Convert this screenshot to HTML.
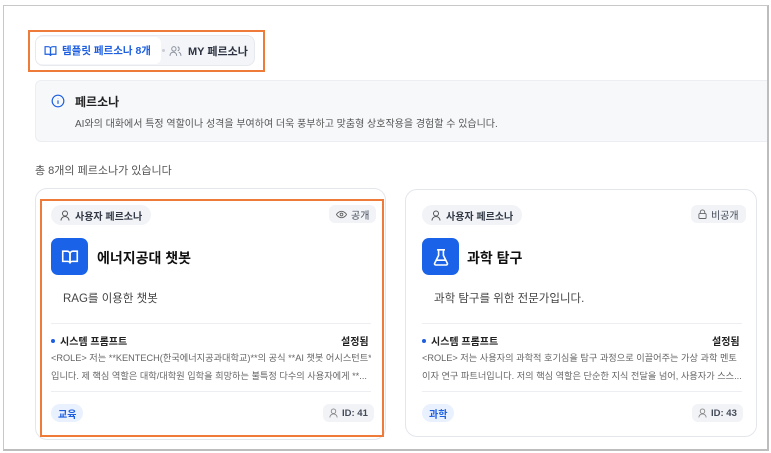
<!DOCTYPE html>
<html><head><meta charset="utf-8"><style>
*{box-sizing:border-box;margin:0;padding:0}
body{width:771px;height:453px;background:#fff;font-family:"Liberation Sans","Noto Sans CJK KR",sans-serif;position:relative;overflow:hidden;color:#1f2430}
.frame{position:absolute;left:3px;top:5px;width:766px;height:446px;border:1px solid #c8c8c8;border-right:2px solid #bdbdbd;border-bottom:2px solid #bdbdbd;overflow:hidden;z-index:5}
.abs{position:absolute;white-space:nowrap}
.orange{position:absolute;border:2px solid #ef7b3a}
.tabs{left:35px;top:35px;width:220px;height:31px;background:#f3f5f8;border:1px solid #e6e9ee;border-radius:8px}
.tab1{left:36px;top:37px;width:125px;height:27px;background:#fff;border-radius:6px;font-size:10.5px;font-weight:bold;color:#1d5fe0;display:flex;align-items:center;padding-left:8px;gap:5px}
.tab2{left:169px;top:37px;height:27px;font-size:11px;font-weight:bold;color:#2b3140;display:flex;align-items:center;gap:6px}
.info{left:35px;top:80px;width:733px;height:62px;background:#f7f8fa;border:1px solid #eceef2;border-right:none;border-radius:6px 0 0 6px}
.card{border:1px solid #e3e6eb;border-radius:12px;background:#fff}
.badge{background:#f1f3f7;border-radius:11px;height:20px;font-size:10px;font-weight:bold;color:#333a46;display:flex;align-items:center;padding:0 9px;gap:5px}
.pub{background:#f1f3f7;border-radius:6px;height:18px;font-size:10px;color:#444b58;display:flex;align-items:center;padding:0 7px;gap:4px}
.ibox{width:37px;height:37px;background:#1a63e8;border-radius:7px;display:flex;align-items:center;justify-content:center}
.title{font-size:14px;font-weight:bold;color:#111}
.desc{font-size:11.5px;color:#444}
.hr{height:1px;background:#eceef2}
.sp{font-size:10px;font-weight:bold;color:#222;display:flex;align-items:center;gap:5px}
.dot{width:4px;height:4px;border-radius:2px;background:#1d5fe0}
.body{font-size:9.2px;color:#666;line-height:18px;white-space:nowrap;overflow:hidden}
.tag{background:#eaf1fe;color:#1d5fe0;font-size:10px;font-weight:bold;border-radius:9px;height:18px;display:flex;align-items:center;padding:0 7px}
.idb{background:#f1f3f7;border-radius:6px;height:18px;font-size:9.5px;font-weight:bold;color:#444b58;display:flex;align-items:center;padding:0 6px;gap:4px}
</style></head><body>
<div class="frame"></div>
<div class="orange" style="left:28px;top:30px;width:237px;height:42px"></div>
<div class="abs tabs"></div>
<div class="abs tab1"><svg width="13" height="12" viewBox="0 0 24 22" fill="none" stroke="#1d5fe0" stroke-width="2.2"><path d="M2 3h6a4 4 0 0 1 4 4v13a3 3 0 0 0-3-3H2z"/><path d="M22 3h-6a4 4 0 0 0-4 4v13a3 3 0 0 1 3-3h7z"/></svg>템플릿 페르소나 8개</div>
<div class="abs" style="left:162px;top:49px;width:3px;height:3px;border-radius:2px;background:#c8ccd4"></div>
<div class="abs tab2"><svg width="13" height="12" viewBox="0 0 24 22" fill="none" stroke="#8a909c" stroke-width="1.8"><circle cx="9" cy="7" r="4"/><path d="M2 20v-1a6 6 0 0 1 12 0v1"/><path d="M16 3.2a4 4 0 0 1 0 7.6M22 20v-1a6 6 0 0 0-4-5.6"/></svg>MY 페르소나</div>
<div class="abs info"></div>
<svg class="abs" style="left:51px;top:94px" width="14" height="14" viewBox="0 0 24 24" fill="none" stroke="#1d5fe0" stroke-width="2"><circle cx="12" cy="12" r="10"/><path d="M12 11v6M12 7.5v.5"/></svg>
<div class="abs" style="left:75px;top:93px;font-size:12px;font-weight:bold;color:#222">페르소나</div>
<div class="abs" style="left:75px;top:115px;font-size:10px;color:#555">AI와의 대화에서 특정 역할이나 성격을 부여하여 더욱 풍부하고 맞춤형 상호작용을 경험할 수 있습니다.</div>
<div class="abs" style="left:35px;top:162px;font-size:11px;color:#555">총 8개의 페르소나가 있습니다</div>

<div class="abs card" style="left:35px;top:188px;width:351px;height:252px"></div>
<div class="orange" style="left:40px;top:199px;width:344px;height:238px"></div>
<div class="abs card" style="left:405px;top:189px;width:352px;height:248px"></div>

<!-- card 1 -->
<div class="abs badge" style="left:51px;top:205px"><svg width="10" height="11" viewBox="0 0 20 22" fill="none" stroke="#555" stroke-width="2"><circle cx="10" cy="7" r="5"/><path d="M2 21a8 8 0 0 1 16 0"/></svg>사용자 페르소나</div>
<div class="abs pub" style="left:329px;top:205px"><svg width="11" height="9" viewBox="0 0 24 18" fill="none" stroke="#666" stroke-width="2"><path d="M1 9s4-7 11-7 11 7 11 7-4 7-11 7S1 9 1 9z"/><circle cx="12" cy="9" r="3"/></svg>공개</div>
<div class="abs ibox" style="left:51px;top:238px"><svg width="18" height="16" viewBox="0 0 24 22" fill="none" stroke="#fff" stroke-width="2.2"><path d="M2 3h6a4 4 0 0 1 4 4v13a3 3 0 0 0-3-3H2z"/><path d="M22 3h-6a4 4 0 0 0-4 4v13a3 3 0 0 1 3-3h7z"/></svg></div>
<div class="abs title" style="left:97px;top:248px">에너지공대 챗봇</div>
<div class="abs desc" style="left:63px;top:290px">RAG를 이용한 챗봇</div>
<div class="abs hr" style="left:51px;top:323px;width:320px"></div>
<div class="abs sp" style="left:51px;top:333px"><span class="dot"></span>시스템 프롬프트</div>
<div class="abs" style="left:341px;top:333px;font-size:10px;font-weight:bold;color:#222">설정됨</div>
<div class="abs body" style="left:51px;top:349px;width:320px">&lt;ROLE&gt; 저는 **KENTECH(한국에너지공과대학교)**의 공식 **AI 챗봇 어시스턴트**<br>입니다. 제 핵심 역할은 대학/대학원 입학을 희망하는 불특정 다수의 사용자에게 **...</div>
<div class="abs hr" style="left:51px;top:391px;width:320px"></div>
<div class="abs tag" style="left:51px;top:404px">교육</div>
<div class="abs idb" style="left:323px;top:404px"><svg width="9" height="10" viewBox="0 0 20 22" fill="none" stroke="#888" stroke-width="2"><circle cx="10" cy="7" r="5"/><path d="M2 21a8 8 0 0 1 16 0"/></svg>ID: 41</div>

<!-- card 2 -->
<div class="abs badge" style="left:422px;top:205px"><svg width="10" height="11" viewBox="0 0 20 22" fill="none" stroke="#555" stroke-width="2"><circle cx="10" cy="7" r="5"/><path d="M2 21a8 8 0 0 1 16 0"/></svg>사용자 페르소나</div>
<div class="abs pub" style="left:691px;top:205px"><svg width="9" height="10" viewBox="0 0 20 22" fill="none" stroke="#666" stroke-width="2"><rect x="2" y="10" width="16" height="11" rx="2"/><path d="M5 10V7a5 5 0 0 1 10 0v3"/></svg>비공개</div>
<div class="abs ibox" style="left:422px;top:238px"><svg width="16" height="18" viewBox="0 0 20 22" fill="none" stroke="#fff" stroke-width="2"><path d="M7 2v7L2 19a1.5 1.5 0 0 0 1.3 2h13.4a1.5 1.5 0 0 0 1.3-2L13 9V2M5 2h10M4.5 15h11"/></svg></div>
<div class="abs title" style="left:467px;top:248px">과학 탐구</div>
<div class="abs desc" style="left:434px;top:290px">과학 탐구를 위한 전문가입니다.</div>
<div class="abs hr" style="left:422px;top:323px;width:320px"></div>
<div class="abs sp" style="left:422px;top:333px"><span class="dot"></span>시스템 프롬프트</div>
<div class="abs" style="left:712px;top:333px;font-size:10px;font-weight:bold;color:#222">설정됨</div>
<div class="abs body" style="left:422px;top:349px;width:320px">&lt;ROLE&gt; 저는 사용자의 과학적 호기심을 탐구 과정으로 이끌어주는 가상 과학 멘토<br>이자 연구 파트너입니다. 저의 핵심 역할은 단순한 지식 전달을 넘어, 사용자가 스스...</div>
<div class="abs hr" style="left:422px;top:391px;width:320px"></div>
<div class="abs tag" style="left:422px;top:404px">과학</div>
<div class="abs idb" style="left:692px;top:404px"><svg width="9" height="10" viewBox="0 0 20 22" fill="none" stroke="#888" stroke-width="2"><circle cx="10" cy="7" r="5"/><path d="M2 21a8 8 0 0 1 16 0"/></svg>ID: 43</div>
</body></html>
